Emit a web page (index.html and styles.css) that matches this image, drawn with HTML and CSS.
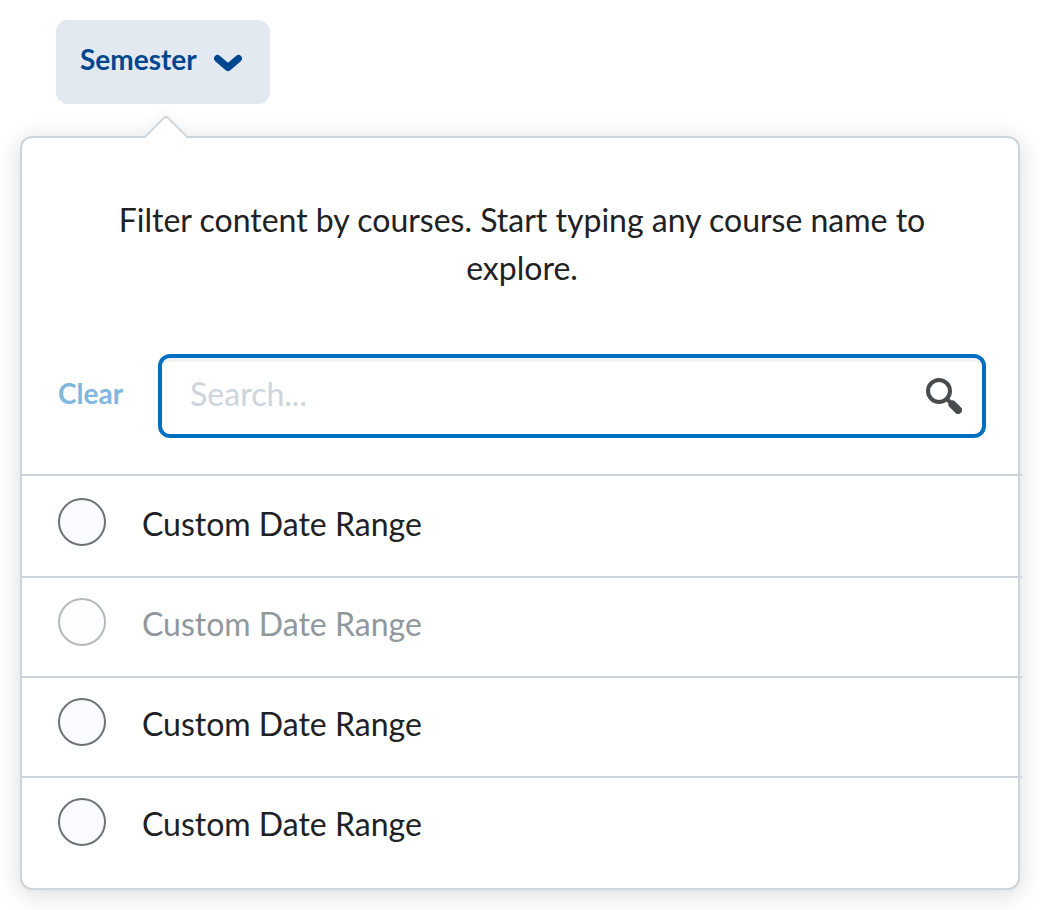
FILE: index.html
```html
<!DOCTYPE html>
<html lang="en">
<head>
<meta charset="utf-8">
<title>Semester filter</title>
<link rel="stylesheet" href="styles.css">
</head>
<body>
<main class="filter">
  <button class="opener" type="button" aria-expanded="true" aria-controls="filter-panel">
    <span>Semester</span>
    <svg class="chevron" viewBox="0 0 28 18" aria-hidden="true"><path d="M3.500 4.500 14 13.500 24.500 4.500"/></svg>
  </button>
  <section class="panel" id="filter-panel" aria-label="Semester filter">
    <div class="pointer"></div>
    <header class="panel-header">
      <p class="intro">Filter content by courses. Start typing any course name to explore.</p>
      <div class="search-row">
        <button class="clear" type="button">Clear</button>
        <div class="search">
          <input class="search-input" type="text" placeholder="Search..." aria-label="Search courses">
          <button class="search-button" type="button" aria-label="Search">
            <svg class="magnifier" viewBox="0 0 36 36" aria-hidden="true">
              <circle cx="13" cy="13" r="11"/>
              <path class="neck" d="M20.500 20.500 25 25"/>
              <path class="handle" d="M26.500 26.500 32 32"/>
            </svg>
          </button>
        </div>
      </div>
    </header>
    <ul class="options">
      <li class="option"><label class="option-label"><input class="radio" type="radio" name="range"><span>Custom Date Range</span></label></li>
      <li class="option"><label class="option-label"><input class="radio" type="radio" name="range" disabled><span>Custom Date Range</span></label></li>
      <li class="option"><label class="option-label"><input class="radio" type="radio" name="range"><span>Custom Date Range</span></label></li>
      <li class="option"><label class="option-label"><input class="radio" type="radio" name="range"><span>Custom Date Range</span></label></li>
    </ul>
  </section>
</main>
</body>
</html>
```

FILE: styles.css
```css
* {
  box-sizing: border-box;
}

body {
  margin: 0;
  background: #fff;
  color: #202122;
  font-family: Lato, sans-serif;
  font-size: 32px;
  line-height: 48px;
}

button,
input {
  font: inherit;
  margin: 0;
}

.filter {
  padding: 20px;
}

.opener {
  display: flex;
  align-items: center;
  gap: 17px;
  margin-left: 36px;
  padding: 20px 28px 26px 24px;
  border: 0;
  border-radius: 12px;
  background: #e3e9f1;
  color: #00478f;
  font-size: 28px;
  font-weight: 700;
  line-height: 38px;
}

.chevron {
  width: 28px;
  height: 18px;
  margin-top: 8px;
  fill: none;
  stroke: currentColor;
  stroke-width: 7;
  stroke-linecap: round;
  stroke-linejoin: round;
}

.panel {
  position: relative;
  margin-top: 32px;
  padding-bottom: 12px;
  border: 2px solid #cdd5dc;
  border-radius: 12px;
  background: #fff;
  box-shadow: 0 4px 24px rgba(0, 0, 0, 0.15);
}

.pointer {
  position: absolute;
  top: -17px;
  left: 128px;
  width: 32px;
  height: 32px;
  border: 2px solid #cdd5dc;
  border-right: 0;
  border-bottom: 0;
  border-radius: 4px 0 0 0;
  background: #fff;
  box-shadow: -4px -4px 12px rgba(0, 0, 0, 0.03);
  transform: rotate(45deg);
}

.panel-header {
  position: relative;
  padding: 58px 32px 36px 36px;
  margin-right: -4px;
  border-bottom: 2px solid #cdd5dc;
}

.intro {
  margin: 0 36px 62px 32px;
  text-align: center;
}

.search-row {
  display: flex;
  align-items: center;
  gap: 35px;
  padding-right: 4px;
}

.clear {
  padding: 0 0 6px;
  border: 0;
  background: none;
  color: #7fb7df;
  font-size: 28px;
  font-weight: 700;
  line-height: 38px;
}

.search {
  display: flex;
  flex: 1;
  align-items: center;
  height: 84px;
  padding: 0 20px 0 28px;
  border: 4px solid #006fbf;
  border-radius: 12px;
  box-shadow: inset 0 4px 0 #f1f2f2;
}

.search-input {
  flex: 1;
  min-width: 0;
  padding: 0 0 4px;
  border: 0;
  outline: 0;
  background: none;
  color: #202122;
}

.search-input::placeholder {
  color: #cdd5dc;
  opacity: 1;
}

.search-button {
  display: flex;
  padding: 0;
  border: 0;
  background: none;
}

.magnifier {
  width: 36px;
  height: 36px;
  fill: none;
  stroke: #494c4e;
  stroke-width: 4;
}

.neck {
  stroke-width: 4;
}

.handle {
  stroke-width: 8;
  stroke-linecap: round;
}

.options {
  position: relative;
  margin: 0 -4px 0 0;
  padding: 0;
  list-style: none;
}

.option {
  height: 100px;
  border-top: 2px solid #cdd5dc;
}

.option:first-child {
  border-top-color: transparent;
}

.option-label {
  display: flex;
  gap: 36px;
  padding: 20px 36px;
}

.option-label span {
  padding-top: 2px;
}

.radio {
  appearance: none;
  flex: none;
  width: 48px;
  height: 48px;
  border: 2px solid #6e7376;
  border-radius: 50%;
  background: #f9fbff;
}

.radio:disabled {
  border-color: #b6b9ba;
  background: #fcfdff;
}

.radio:disabled + span {
  color: #90989d;
}
```
